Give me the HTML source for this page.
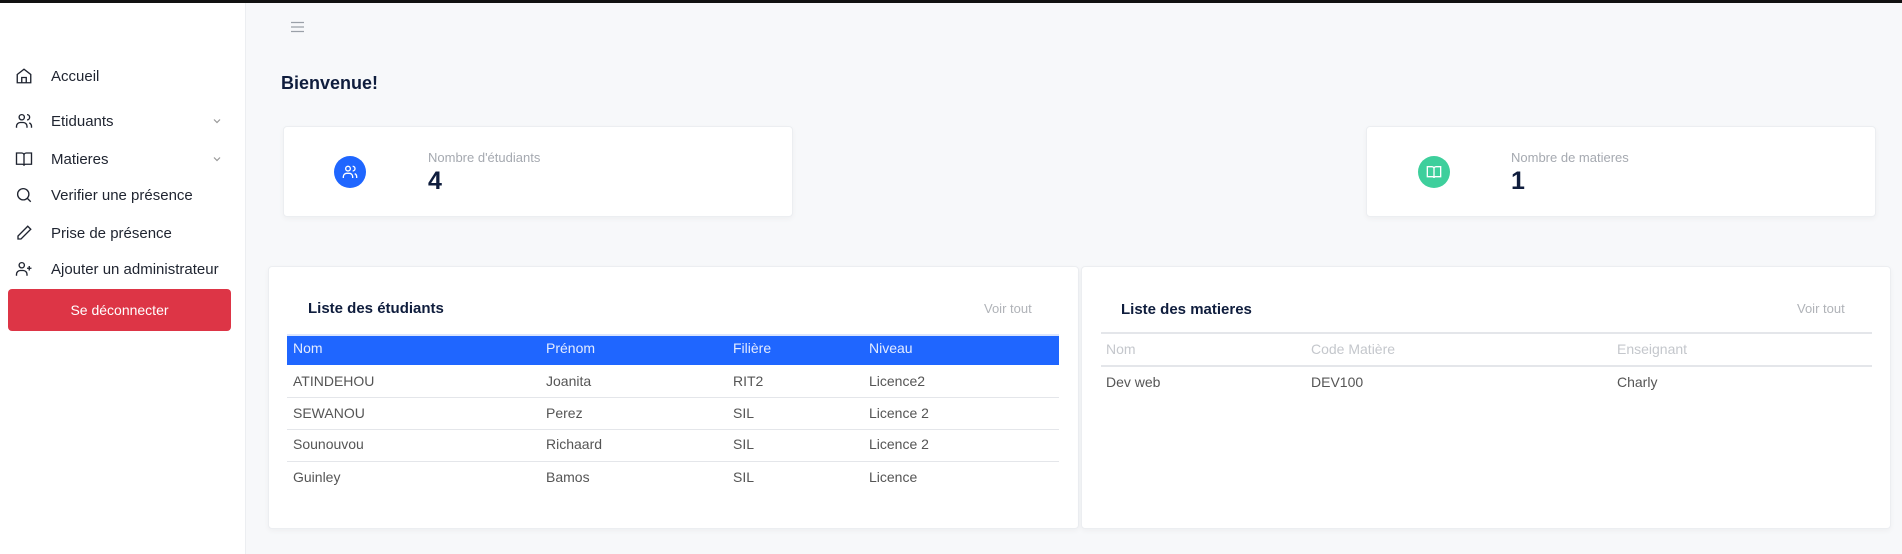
<!DOCTYPE html>
<html><head><meta charset="utf-8"><style>
*{margin:0;padding:0;box-sizing:border-box}
body{width:1902px;height:554px;overflow:hidden;background:#f7f8fa;font-family:"Liberation Sans",sans-serif;position:relative;color:#333}
.topbar{position:absolute;left:0;top:0;width:1902px;height:3px;background:#111}
.side{position:absolute;left:0;top:3px;width:246px;height:551px;background:#fff;border-right:1px solid #eceef1}
.mi{position:absolute;left:0;height:24px;display:flex;align-items:center;font-size:15px;color:#1f2430;width:246px}
.mi svg{position:absolute;left:15px;width:18px;height:18px}
.mi span{position:absolute;left:51px}
.mi .ch{position:absolute;left:212px;width:10px;height:10px}
.btn{position:absolute;left:8px;top:289px;width:223px;height:42px;background:#dd3546;border-radius:4px;color:#fff;font-size:14px;display:flex;align-items:center;justify-content:center}
.card{position:absolute;background:#fff;border:1px solid #eceef1;border-radius:4px;box-shadow:0 2px 6px rgba(0,0,0,.04)}
.circ{position:absolute;width:32px;height:32px;border-radius:50%;display:flex;align-items:center;justify-content:center}
.lbl{position:absolute;font-size:13px;color:#a5a9b0}
.val{position:absolute;font-size:25px;font-weight:bold;color:#0f1d3d}
h1{position:absolute;left:281px;top:73px;font-size:18px;color:#0f1d3d}
.tt{position:absolute;font-size:15px;font-weight:bold;color:#0f1d3d}
.vt{position:absolute;font-size:13px;color:#b0b3b8}
.c{position:absolute;font-size:14px;color:#555}
.bh{position:absolute;left:287px;top:334px;width:772px;height:31px;background:#1f66ff;border-top:2px solid #dbe6ff}
.hl{position:absolute;height:1px;background:#e4e6ea}
</style></head><body>
<div class="topbar"></div>
<div class="side">
<svg style="position:absolute;left:289px;top:22px" width="16" height="12"></svg>
</div>
<svg style="position:absolute;left:290px;top:21px" width="15" height="12" viewBox="0 0 15 12"><path d="M1 1.5H14M1 6H14M1 10.5H14" stroke="#9aa0a8" stroke-width="1.3"/></svg>

<div class="mi" style="top:64px"><svg viewBox="0 0 24 24" fill="none" stroke="#1f2430" stroke-width="1.8"><path d="M3 10L12 3l9 7v11H3z"/><path d="M9 21v-7h6v7"/></svg><span>Accueil</span></div>
<div class="mi" style="top:109px"><svg viewBox="0 0 24 24" fill="none" stroke="#1f2430" stroke-width="1.8"><circle cx="9" cy="7" r="3.5"/><path d="M2 21v-2a5 5 0 0 1 5-5h4a5 5 0 0 1 5 5v2M16 3.5a3.5 3.5 0 0 1 0 7M22 21v-2a5 5 0 0 0-3-4.5"/></svg><span>Etiduants</span><svg class="ch" viewBox="0 0 10 10" fill="none" stroke="#999" stroke-width="1.2"><path d="M2 3.5l3 3 3-3"/></svg></div>
<div class="mi" style="top:147px"><svg viewBox="0 0 24 24" fill="none" stroke="#1f2430" stroke-width="1.8"><path d="M2 4h7a3 3 0 0 1 3 3v14a2 2 0 0 0-2-2H2zM22 4h-7a3 3 0 0 0-3 3v14a2 2 0 0 1 2-2h8z"/></svg><span>Matieres</span><svg class="ch" viewBox="0 0 10 10" fill="none" stroke="#999" stroke-width="1.2"><path d="M2 3.5l3 3 3-3"/></svg></div>
<div class="mi" style="top:183px"><svg viewBox="0 0 24 24" fill="none" stroke="#1f2430" stroke-width="1.8"><circle cx="11" cy="11" r="7.5"/><path d="M21 21l-4.5-4.5"/></svg><span>Verifier une présence</span></div>
<div class="mi" style="top:221px"><svg viewBox="0 0 24 24" fill="none" stroke="#1f2430" stroke-width="1.8"><path d="M17 3l4 4L8 20H4v-4z"/></svg><span>Prise de présence</span></div>
<div class="mi" style="top:257px"><svg viewBox="0 0 24 24" fill="none" stroke="#1f2430" stroke-width="1.8"><circle cx="9" cy="7" r="3.5"/><path d="M2 21v-2a5 5 0 0 1 5-5h4a5 5 0 0 1 5 5v2M19 8v6M16 11h6"/></svg><span>Ajouter un administrateur</span></div>
<div class="btn">Se déconnecter</div>

<h1>Bienvenue!</h1>

<div class="card" style="left:283px;top:126px;width:510px;height:91px"></div>
<div class="circ" style="left:334px;top:156px;background:#1f66ff"><svg width="16" height="16" viewBox="0 0 24 24" fill="none" stroke="#fff" stroke-width="2"><circle cx="9" cy="7" r="3.5"/><path d="M2 21v-2a5 5 0 0 1 5-5h4a5 5 0 0 1 5 5v2M16 3.5a3.5 3.5 0 0 1 0 7M22 21v-2a5 5 0 0 0-3-4.5"/></svg></div>
<div class="lbl" style="left:428px;top:150px">Nombre d'étudiants</div>
<div class="val" style="left:428px;top:167px">4</div>

<div class="card" style="left:1366px;top:126px;width:510px;height:91px"></div>
<div class="circ" style="left:1418px;top:156px;background:#3ecf9c"><svg width="16" height="16" viewBox="0 0 24 24" fill="none" stroke="#fff" stroke-width="2"><path d="M2 4h7a3 3 0 0 1 3 3v14a2 2 0 0 0-2-2H2zM22 4h-7a3 3 0 0 0-3 3v14a2 2 0 0 1 2-2h8z"/></svg></div>
<div class="lbl" style="left:1511px;top:150px">Nombre de matieres</div>
<div class="val" style="left:1511px;top:167px">1</div>

<div class="card" style="left:268px;top:266px;width:811px;height:263px"></div>
<div class="tt" style="left:308px;top:300px">Liste des étudiants</div>
<div class="vt" style="left:984px;top:301px">Voir tout</div>
<div class="bh"></div>
<div class="c" style="left:293px;top:340px;color:#e3ebff">Nom</div>
<div class="c" style="left:546px;top:340px;color:#e3ebff">Prénom</div>
<div class="c" style="left:733px;top:340px;color:#e3ebff">Filière</div>
<div class="c" style="left:869px;top:340px;color:#e3ebff">Niveau</div>
<div class="c" style="left:293px;top:373px">ATINDEHOU</div><div class="c" style="left:546px;top:373px">Joanita</div><div class="c" style="left:733px;top:373px">RIT2</div><div class="c" style="left:869px;top:373px">Licence2</div>
<div class="hl" style="left:287px;top:397px;width:772px"></div>
<div class="c" style="left:293px;top:405px">SEWANOU</div><div class="c" style="left:546px;top:405px">Perez</div><div class="c" style="left:733px;top:405px">SIL</div><div class="c" style="left:869px;top:405px">Licence 2</div>
<div class="hl" style="left:287px;top:429px;width:772px"></div>
<div class="c" style="left:293px;top:436px">Sounouvou</div><div class="c" style="left:546px;top:436px">Richaard</div><div class="c" style="left:733px;top:436px">SIL</div><div class="c" style="left:869px;top:436px">Licence 2</div>
<div class="hl" style="left:287px;top:461px;width:772px"></div>
<div class="c" style="left:293px;top:469px">Guinley</div><div class="c" style="left:546px;top:469px">Bamos</div><div class="c" style="left:733px;top:469px">SIL</div><div class="c" style="left:869px;top:469px">Licence</div>

<div class="card" style="left:1081px;top:266px;width:810px;height:263px"></div>
<div class="tt" style="left:1121px;top:301px">Liste des matieres</div>
<div class="vt" style="left:1797px;top:301px">Voir tout</div>
<div class="hl" style="left:1101px;top:332px;width:771px;height:2px"></div>
<div class="c" style="left:1106px;top:341px;color:#c4c7cc">Nom</div>
<div class="c" style="left:1311px;top:341px;color:#c4c7cc">Code Matière</div>
<div class="c" style="left:1617px;top:341px;color:#c4c7cc">Enseignant</div>
<div class="hl" style="left:1101px;top:365px;width:771px;height:2px"></div>
<div class="c" style="left:1106px;top:374px">Dev web</div>
<div class="c" style="left:1311px;top:374px">DEV100</div>
<div class="c" style="left:1617px;top:374px">Charly</div>
</body></html>
